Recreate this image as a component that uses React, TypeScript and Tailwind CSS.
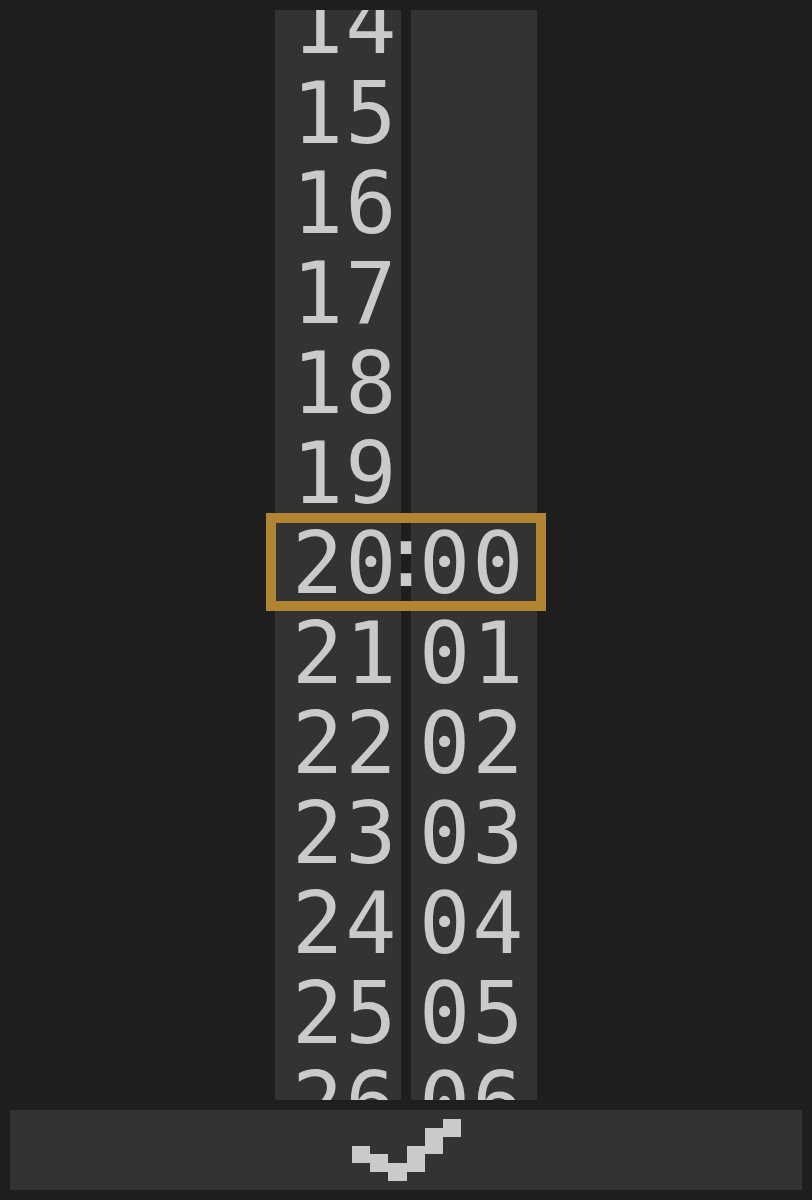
import React from "react";

const hours = ["14", "15", "16", "17", "18", "19", "20", "21", "22", "23", "24", "25", "26"];
const minutes = ["", "", "", "", "", "", "00", "01", "02", "03", "04", "05", "06"];

const font = { fontFamily: '"DejaVu Sans Mono", "Liberation Mono", monospace' };

function Column({ items, pad }: { items: string[]; pad: string }) {
  return (
    <div className="w-[126px] h-full overflow-hidden bg-[#333333]">
      <div className="-mt-[33px] flex flex-col">
        {items.map((t, i) => (
          <div
            key={i}
            className={`h-[90px] pt-[2px] text-[85px] leading-[90px] text-[#cacaca] tracking-[2px] whitespace-nowrap ${pad}`}
            style={font}
          >
            {t}
          </div>
        ))}
      </div>
    </div>
  );
}

function Check() {
  return (
    <svg width="109" height="62" viewBox="0 0 12 7" preserveAspectRatio="none" shapeRendering="crispEdges">
      <g fill="#cacaca">
        <rect x="0" y="3" width="2" height="2" />
        <rect x="2" y="4" width="2" height="2" />
        <rect x="4" y="5" width="2" height="2" />
        <rect x="6" y="3" width="2" height="3" />
        <rect x="8" y="1" width="2" height="3" />
        <rect x="10" y="0" width="2" height="2" />
      </g>
    </svg>
  );
}

export default function App() {
  return (
    <div className="w-full h-[1200px] bg-[#1e1e1e] flex flex-col p-[10px] gap-[10px]">
      <div className="flex-1 flex justify-center min-h-0">
        <div className="relative flex gap-[10px] h-full">
          <Column items={hours} pad="pl-[17px]" />
          <Column items={minutes} pad="pl-[8px]" />
          <div className="absolute left-[-9px] top-[503px] w-[280px] h-[98px] border-[10px] border-[#b08430]" />
          <div
            className="absolute left-[126px] top-[502px] w-[10px] h-[90px] flex justify-center text-[85px] leading-[90px] text-[#cacaca]"
            style={font}
          >
            <span className="block">:</span>
          </div>
        </div>
      </div>
      <button className="h-[80px] w-full bg-[#333333] flex items-center justify-center shrink-0">
        <Check />
      </button>
    </div>
  );
}
